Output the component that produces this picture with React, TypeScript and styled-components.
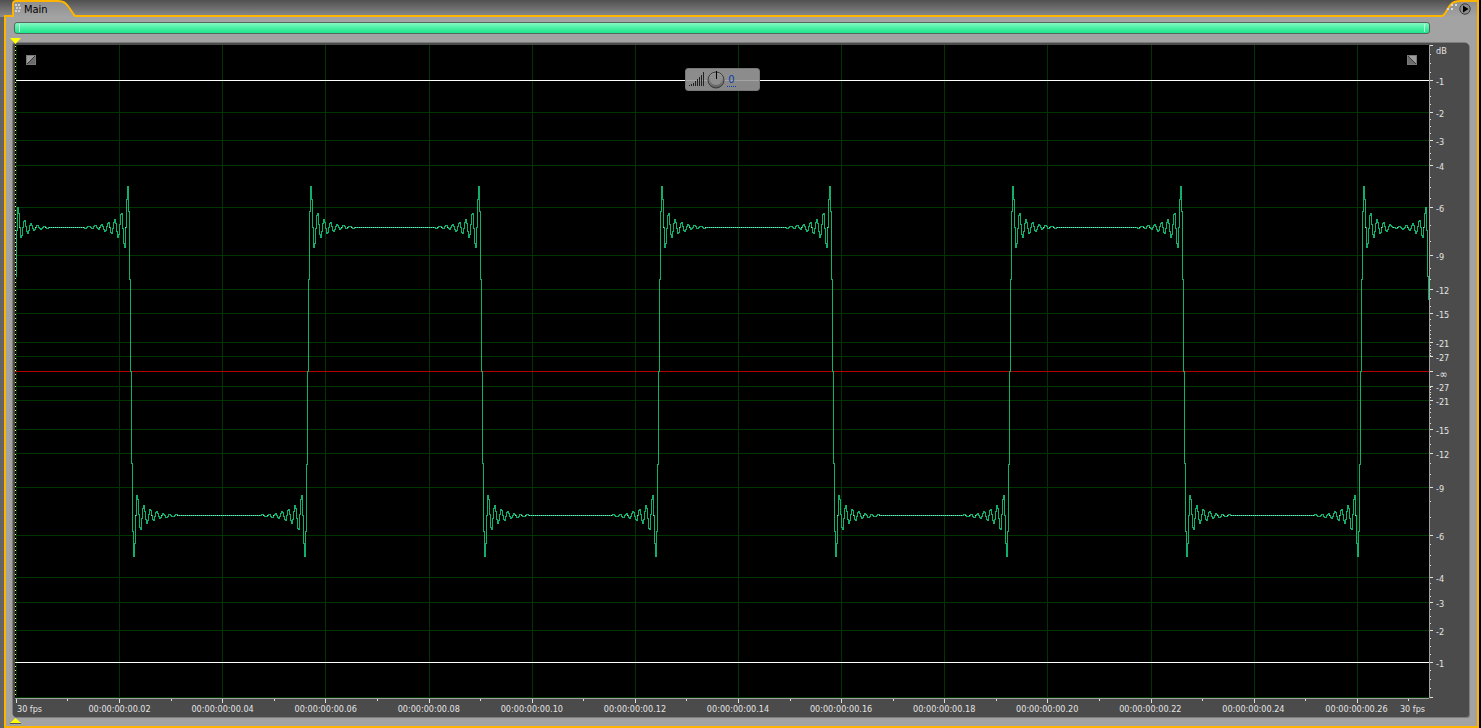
import React from "react";
import styled, { createGlobalStyle } from "styled-components";

const GlobalStyle = createGlobalStyle`
  * { box-sizing: border-box; }
  body {
    margin: 0;
    background: #000;
    font-family: "DejaVu Sans Condensed", "DejaVu Sans", sans-serif;
  }
`;

const ORANGE = "#ffb400";
const PANEL = "#a3a3a3";
const RULER = "#4b4b4b";
const WAVE = "#12ae6c";

/* ---------- scales ---------- */

const PLOT_W = 1414;
const PLOT_H = 653;
const MID = 326;
const STEP = 103.1;

const LEVELS = [1, 2, 3, 4, 6, 9, 12, 15, 21, 27];

const levelOffset = (db: number) => Math.round(326.4 * Math.pow(10, -db / 20) - 0.01);

const minorLevels = (): number[] => {
  const out: number[] = [];
  for (let d = 0.25; d < 4; d += 0.25) out.push(d);
  for (let d = 4.5; d < 6; d += 0.5) out.push(d);
  for (let d = 7; d < 27; d += 1) out.push(d);
  return out.filter((d) => !LEVELS.includes(d));
};

type Mark = { y: number; text: string };

const MARKS: Mark[] = [
  ...LEVELS.map((d) => ({ y: MID - levelOffset(d), text: `-${d}` })),
  { y: MID + 2, text: "-∞" },
  ...[...LEVELS].reverse().map((d) => ({ y: MID + levelOffset(d), text: `-${d}` })),
];

const TIMES = Array.from({ length: 13 }, (_, i) => `00:00:00:00.${String((i + 1) * 2).padStart(2, "0")}`);

/* ---------- waveform: a band-limited square wave ---------- */

const RING = [41, -20, 14, -10, 8, -6, 5, -4, 3, -2, 2, -1, 1, -1];
const SOFT_RING = [20, -10, 7, -6, 4, -3, 2, -2, 1, -1];
const RING_STEP = 3.25;
const HIGH = 182;
const LOW = 470;
const EDGES = [115, 292, 466, 643, 817, 994, 1168, 1345];

type Point = [number, number];

const buildPoints = (): Point[] => {
  const pts: Point[] = [[-1, 254]];
  const segment = (from: number, to: number, high: boolean, head: number[], tail: number[]) => {
    const base = high ? HIGH : LOW;
    const sign = high ? -1 : 1;
    const half = (to - from) / 2;
    head.forEach((d, i) => {
      if (i * RING_STEP < half) pts.push([from + i * RING_STEP, base + sign * d]);
    });
    if (head.length * RING_STEP < half) {
      pts.push([from + head.length * RING_STEP, base]);
      pts.push([to - tail.length * RING_STEP, base]);
    }
    [...tail.keys()].reverse().forEach((i) => {
      if (i * RING_STEP < half) pts.push([to - i * RING_STEP, base + sign * tail[i]]);
    });
  };
  segment(2, EDGES[0] - 3, true, SOFT_RING, RING);
  for (let i = 0; i < EDGES.length - 1; i++) {
    segment(EDGES[i] + 3, EDGES[i + 1] - 3, i % 2 === 1, RING, RING);
  }
  segment(EDGES[7] + 3, 1410, true, RING.slice(0, 9), SOFT_RING);
  pts.push([1413, 254]);
  return pts;
};

const POINTS = buildPoints();

const sample = (x: number): number => {
  for (let i = 1; i < POINTS.length; i++) {
    const [x0, y0] = POINTS[i - 1];
    const [x1, y1] = POINTS[i];
    if (x <= x1) {
      const t = (1 - Math.cos((Math.PI * (x - x0)) / (x1 - x0))) / 2;
      return Math.round(y0 + (y1 - y0) * t);
    }
  }
  return 254;
};

const { wavePath, sparkPath } = (() => {
  let wave = `M0.5 ${sample(0) + 0.5}`;
  let spark = "";
  for (let x = 1; x < PLOT_W; x++) {
    const near = POINTS.find(
      ([px, py], i) => i > 0 && i < POINTS.length - 1 && Math.round(px) === x && py !== HIGH && py !== LOW
    );
    const y = near ? near[1] : sample(x);
    wave += `H${x + 0.5}V${y + 0.5}`;
    if (x % 2 === 0 && (y === HIGH || y === LOW)) spark += `M${x} ${y + 0.5}h1`;
  }
  return { wavePath: wave, sparkPath: spark };
})();

/* ---------- frame ---------- */

const Page = styled.div`
  display: flex;
  flex-direction: column;
  min-height: 100vh;
  padding-left: 4px;
  border-right: 2px solid #000;
  background: #646464;
`;

const Header = styled.header`
  display: flex;
  height: 17px;
  margin-left: -4px;
  padding-left: 4px;
  background: linear-gradient(#505050, #8c8c8c);
`;

const TabBox = styled.div`
  position: relative;
  width: 76px;
  height: 17px;
`;

const TabArt = styled.svg`
  display: block;
`;

const TabButton = styled.button`
  position: absolute;
  inset: 2px 12px 0 10px;
  padding: 0 0 0 10px;
  border: 0;
  background: transparent;
  color: #000;
  font: 11px/14px "DejaVu Sans Condensed", "DejaVu Sans", sans-serif;
  text-align: left;
`;

const HeaderRule = styled.div`
  flex: 1;
  border-bottom: 2px solid ${ORANGE};
`;

const MenuBox = styled.div`
  position: relative;
  width: 41px;
  height: 17px;
`;

const MenuButton = styled.button`
  position: absolute;
  top: 3px;
  right: 8px;
  width: 12px;
  height: 12px;
  padding: 0;
  border: 0;
  background: transparent;
  line-height: 0;
`;

const Panel = styled.main`
  display: flex;
  flex: 1;
  flex-direction: column;
  padding: 5px 8px 9px 7px;
  border: solid ${ORANGE};
  border-width: 0 2px 2px;
  background: ${PANEL};
`;

const Overview = styled.div`
  display: flex;
  justify-content: space-between;
  height: 12px;
  margin: 0 39px 9px 1px;
  padding: 1px 4px;
  border: 1px solid #56665e;
  border-radius: 3px;
  background: linear-gradient(#86f8c4, #4af0a4 50%, #1fe68c);
`;

const Grip = styled.span`
  width: 1px;
  background: #b4ffdc;
`;

const Frame = styled.section`
  position: relative;
  display: grid;
  flex: 1;
  grid-template-columns: minmax(0, 1fr) 40px;
  grid-template-rows: minmax(400px, 1fr) 19px;
  padding: 2px 0 0 2px;
  border-radius: 3px 4px 3px 3px;
  background: ${RULER};
  box-shadow: 1px 1px 0 #7c7c7c, -1px -1px 0 #7c7c7c;
`;

const Playhead = styled.svg<{ $bottom?: boolean }>`
  position: absolute;
  left: -3px;
  ${(p) => (p.$bottom ? "bottom: -7px;" : "top: -5px;")}
`;

const Plot = styled.div`
  position: relative;
  background: #000;
`;

const Chart = styled.svg`
  position: absolute;
  inset: 0;
  width: 100%;
  height: 100%;
`;

const FadeHandle = styled.button<{ $side: "left" | "right" }>`
  position: absolute;
  top: 10px;
  ${(p) => (p.$side === "left" ? "left: 11px;" : "right: 12px;")}
  width: 10px;
  height: 10px;
  padding: 0;
  border: 1px solid #7a7a7a;
  background: ${(p) =>
    p.$side === "left"
      ? "linear-gradient(135deg, #9c9c9c 47%, #3a3a3a 50%, #6c6c6c 56%)"
      : "linear-gradient(45deg, #6c6c6c 44%, #3a3a3a 50%, #9c9c9c 53%)"};
`;

const Hud = styled.div`
  position: absolute;
  top: 23px;
  left: 50%;
  display: flex;
  align-items: center;
  width: 75px;
  height: 23px;
  margin-left: -37px;
  padding-left: 3px;
  border: 1px solid #787878;
  border-radius: 3px;
  background: linear-gradient(#8c8c8c 0 11px, #a4a4a4 11px 12px, #888 12px);
`;

const HudValue = styled.input`
  width: 9px;
  height: 15px;
  margin: 0 0 0 1px;
  padding: 0;
  border: 0;
  border-bottom: 1px dotted #0a3ea8;
  background: transparent;
  color: #0a3ea8;
  font: 11px/14px "DejaVu Sans Condensed", "DejaVu Sans", sans-serif;
  text-align: center;
`;

/* ---------- rulers ---------- */

const LevelRuler = styled.div`
  position: relative;
  display: flex;
  flex-direction: column;
  border-left: 1px solid #a0a0a0;
  color: #e4e4e4;
  font-size: 9px;
  line-height: 12px;
`;

const LevelTicks = styled.svg`
  position: absolute;
  top: 0;
  left: 0;
  width: 4px;
  height: 100%;
`;

const LevelMark = styled.div`
  display: flex;
  align-items: flex-end;
  min-height: 0;
  padding-left: 6px;
`;

const LevelText = styled.span<{ $large?: boolean }>`
  margin-bottom: -8px;
  font-size: ${(p) => (p.$large ? 11 : 9)}px;
`;

const Unit = styled.span`
  position: absolute;
  top: 0;
  left: 6px;
`;

const TimeRuler = styled.div`
  position: relative;
  display: flex;
  padding-top: 4px;
  border-top: 1px solid #a0a0a0;
  color: #e4e4e4;
  font-size: 9px;
  line-height: 12px;
  white-space: nowrap;
`;

const TimeTicks = styled.svg`
  position: absolute;
  top: 0;
  left: 0;
  width: 100%;
  height: 4px;
`;

const TimeCell = styled.div<{ $grow: number; $align: string }>`
  display: flex;
  flex: ${(p) => p.$grow} 0 0;
  justify-content: ${(p) => p.$align};
  min-width: 0;
`;

const EdgeLabel = styled.span`
  margin: 0 4px 0 2px;
`;

const range = (n: number) => Array.from({ length: n }, (_, i) => i);

const gridX = (i: number) => Math.floor(1.4 + i * 103.15) + 0.5;

const DOTS: Point[] = [[0, 0], [3, 0], [0, 3], [3, 3], [0, 6], [3, 6]];

function LeftTab() {
  return (
    <TabBox>
      <TabArt width="76" height="17" aria-hidden="true">
        <defs>
          <linearGradient id="tab" x1="0" y1="0" x2="0" y2="1">
            <stop offset="0" stopColor="#8e8e8e" />
            <stop offset="1" stopColor={PANEL} />
          </linearGradient>
        </defs>
        <path d="M0 17V16H9V4Q9 1 12 1H54C64 1 65 9 71 16H76V17Z" fill="url(#tab)" />
        <path d="M0 16H9V4Q9 1 12 1H54C64 1 65 9 71 16H76" fill="none" stroke={ORANGE} strokeWidth="2" />
        {DOTS.map(([x, y]) => (
          <rect key={`${x}-${y}`} x={11 + x + (y === 3 ? 1 : 0)} y={4 + y} width="2" height="2" fill="#d0d0d0" />
        ))}
      </TabArt>
      <TabButton type="button">Main</TabButton>
    </TabBox>
  );
}

function PanelMenu() {
  return (
    <MenuBox>
      <TabArt width="41" height="17" aria-hidden="true">
        <path d="M0 17V16H4C10 14 9 1 22 1H40V17Z" fill="url(#tab)" />
        <path d="M0 16H4C10 14 9 1 22 1H40V17" fill="none" stroke={ORANGE} strokeWidth="2" />
        {[[13, 4], [17, 4], [9, 8], [13, 8]].map(([x, y]) => (
          <rect key={`${x}-${y}`} x={x} y={y} width="2" height="2" fill="#d8d8d8" />
        ))}
      </TabArt>
      <MenuButton type="button" aria-label="Panel menu">
        <svg width="12" height="12">
          <circle cx="6" cy="6" r="5.2" fill="#8c8c8c" stroke="#3c3c3c" />
          <path d="M4 2.5L9.5 6L4 9.5Z" fill="#000" />
        </svg>
      </MenuButton>
    </MenuBox>
  );
}

function Waveform() {
  return (
    <Chart viewBox={`0 0 ${PLOT_W} ${PLOT_H}`} preserveAspectRatio="none" shapeRendering="crispEdges" fill="none">
      <g stroke="#003400">
        {range(14).map((i) => (
          <path key={i} d={`M${gridX(i)} 0V${PLOT_H}`} />
        ))}
        {LEVELS.slice(1).map((d) => (
          <path
            key={d}
            d={`M0 ${MID - levelOffset(d) + 0.5}H${PLOT_W}M0 ${MID + levelOffset(d) + 0.5}H${PLOT_W}`}
          />
        ))}
        <path d={`M0 ${PLOT_H - 0.5}H${PLOT_W}`} />
      </g>
      <path d={`M0 ${MID + 0.5}H${PLOT_W}`} stroke="#b40000" />
      <path d={wavePath} stroke={WAVE} />
      <path d={sparkPath} stroke="#7ce8ba" />
      <path d={`M1 35.5H${PLOT_W}M1 617.5H${PLOT_W}`} stroke="#fff" />
      <path d={`M0.5 1V${PLOT_H}`} stroke="#ffff50" strokeDasharray="1 3" />
    </Chart>
  );
}

function VolumeHud() {
  return (
    <Hud>
      <svg width="15" height="15" aria-hidden="true" shapeRendering="crispEdges">
        {[1, 2, 3, 5, 7, 9, 11, 14].map((h, i) => (
          <rect key={i} x={i * 2} y={14 - h} width="1" height={h} fill="#222" />
        ))}
      </svg>
      <svg width="22" height="20" aria-hidden="true">
        <defs>
          <linearGradient id="knob" x1="0" y1="0" x2="0" y2="1">
            <stop offset="0" stopColor="#a8a8a8" />
            <stop offset="1" stopColor="#5c5c5c" />
          </linearGradient>
        </defs>
        <circle cx="12" cy="10" r="8" fill="url(#knob)" stroke="#3a3a3a" />
        <circle cx="12" cy="9" r="6" fill="#8e8e8e" />
        <path d="M12 1V9" stroke="#000" strokeWidth="1" shapeRendering="crispEdges" />
      </svg>
      <HudValue aria-label="Volume" defaultValue="0" />
    </Hud>
  );
}

function Levels() {
  const minor = minorLevels();
  return (
    <LevelRuler>
      <LevelTicks viewBox={`0 0 4 ${PLOT_H}`} preserveAspectRatio="none" shapeRendering="crispEdges" stroke="#e0e0e0">
        {minor.map((d) => (
          <path key={d} d={`M0 ${MID - levelOffset(d) + 0.5}H1M0 ${MID + levelOffset(d) + 0.5}H1`} />
        ))}
        {[0, ...LEVELS].map((d) => (
          <path key={d} d={`M0 ${MID - levelOffset(d) + 0.5}H3M0 ${MID + levelOffset(d) + 0.5}H3`} />
        ))}
        <path d={`M0 ${MID + 0.5}H3`} />
      </LevelTicks>
      <Unit>dB</Unit>
      {MARKS.map((m, i) => (
        <LevelMark key={i} style={{ flex: `${m.y - (i ? MARKS[i - 1].y : 0)} 0 0` }}>
          <LevelText $large={m.text === "-∞"}>{m.text}</LevelText>
        </LevelMark>
      ))}
      <LevelMark style={{ flex: `${PLOT_H - MARKS[MARKS.length - 1].y} 0 0` }} />
    </LevelRuler>
  );
}

function Times() {
  return (
    <TimeRuler>
      <TimeTicks viewBox={`0 0 ${PLOT_W} 4`} preserveAspectRatio="none" shapeRendering="crispEdges" stroke="#e0e0e0">
        {range(28).map((i) => (
          <path key={i} d={`M${gridX(i / 2)} 0V${i % 2 ? 2 : 4}`} />
        ))}
      </TimeTicks>
      <TimeCell $grow={53} $align="flex-start">
        <EdgeLabel>30 fps</EdgeLabel>
      </TimeCell>
      {TIMES.map((t) => (
        <TimeCell key={t} $grow={STEP} $align="center">
          <span>{t}</span>
        </TimeCell>
      ))}
      <TimeCell $grow={21} $align="flex-end">
        <EdgeLabel>30 fps</EdgeLabel>
      </TimeCell>
    </TimeRuler>
  );
}

export default function App() {
  return (
    <>
      <GlobalStyle />
      <Page>
        <Header>
          <LeftTab />
          <HeaderRule />
          <PanelMenu />
        </Header>
        <Panel>
          <Overview>
            <Grip />
            <Grip />
          </Overview>
          <Frame>
            <Plot>
              <Waveform />
              <FadeHandle $side="left" type="button" aria-label="Fade in" />
              <FadeHandle $side="right" type="button" aria-label="Fade out" />
              <VolumeHud />
            </Plot>
            <Levels />
            <Times />
            <Playhead width="11" height="6" aria-hidden="true">
              <path d="M0 0H11L5.5 6Z" fill="#ffff00" />
            </Playhead>
            <Playhead $bottom width="11" height="6" aria-hidden="true">
              <path d="M5.5 0L11 5H0Z" fill="#ffff00" />
              <path d="M0 5.5H11" stroke="#555" />
            </Playhead>
          </Frame>
        </Panel>
      </Page>
    </>
  );
}
